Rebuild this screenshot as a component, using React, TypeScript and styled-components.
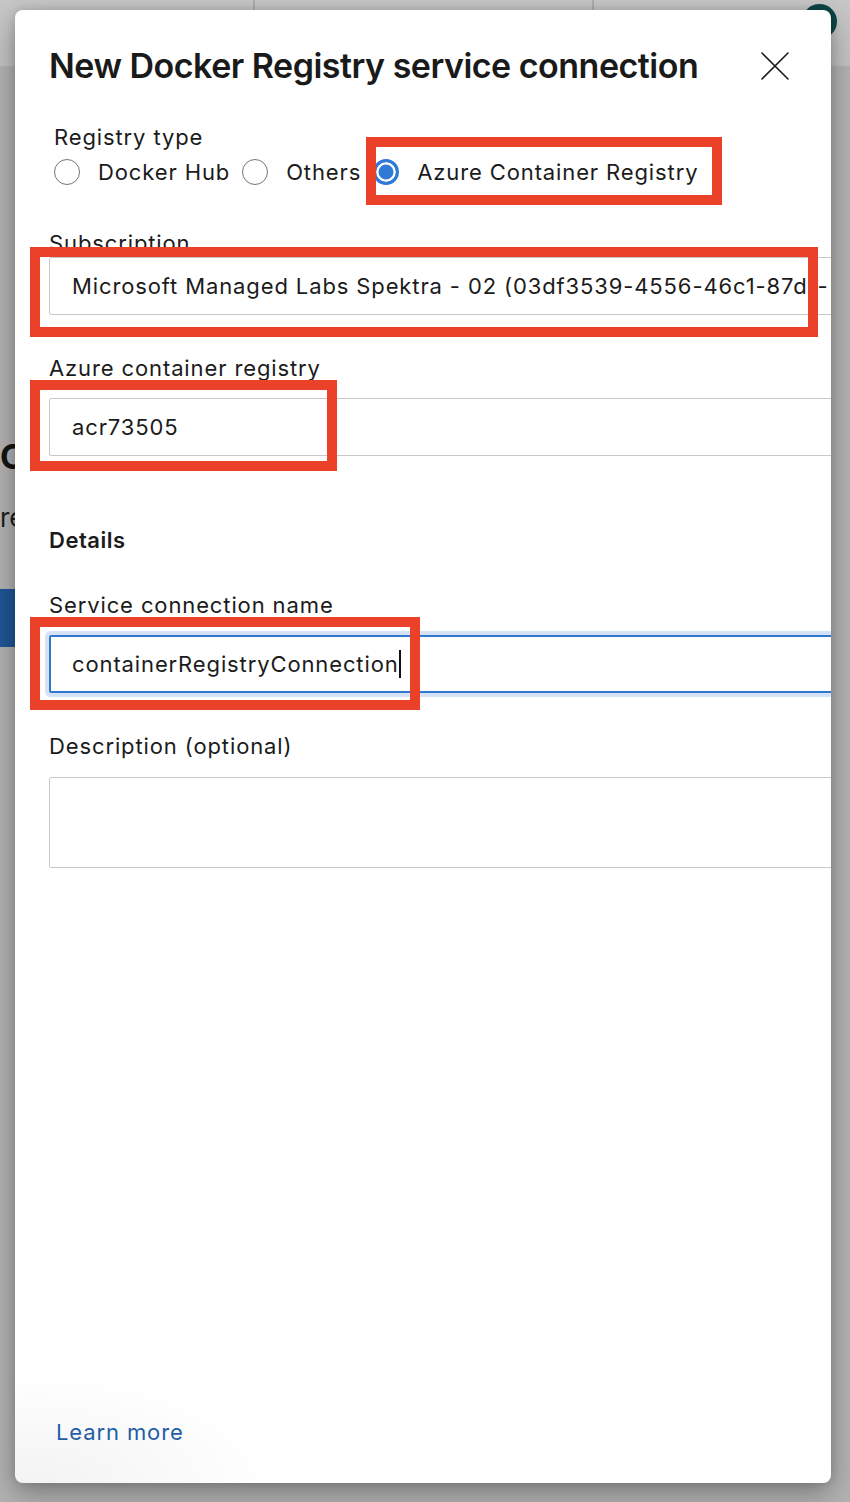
import React from "react";
import styled, { createGlobalStyle } from "styled-components";

const GlobalStyle = createGlobalStyle`
  html, body { margin: 0; padding: 0; }
  body {
    width: 850px;
    height: 1502px;
    overflow: hidden;
    background: #b2b2b2;
    font-family: Inter, "Liberation Sans", sans-serif;
  }
  * { box-sizing: border-box; }
`;

const FONT = `Inter, "Liberation Sans", sans-serif`;
const BODY_SPACING = "0.88px";

const Page = styled.div`
  position: relative;
  width: 850px;
  height: 1502px;
  overflow: hidden;
  background: #b2b2b2;
  font-family: ${FONT};
`;

/* ---------- page behind the dialog ---------- */
const BackHeader = styled.header`
  display: flex;
  height: 66px;
  background: linear-gradient(#c7c7c7, #c1c1c1);
`;

const HeaderCell = styled.div<{ $w: number }>`
  flex: none;
  width: ${(p) => p.$w}px;
  border-right: 2px solid #adadad;
`;

const HeaderEnd = styled.div`
  flex: 1;
  display: flex;
  justify-content: flex-end;
  align-items: flex-start;
  padding: 4px 13px 0 0;
`;

const Avatar = styled.div`
  width: 35px;
  height: 35px;
  border-radius: 50%;
  background: #0e4646;
`;

const BackBody = styled.main`
  display: flex;
  flex-direction: column;
  align-items: flex-start;
  padding-top: 371px;
`;

const BackHeading = styled.h2`
  margin: 0;
  font-size: 34px;
  line-height: 40px;
  font-weight: 700;
  color: #141414;
  white-space: nowrap;
`;

const BackText = styled.p`
  margin: 25px 0 0;
  font-size: 26px;
  line-height: 32px;
  color: #1c1c1c;
  white-space: nowrap;
`;

const BackButton = styled.div`
  margin-top: 55px;
  width: 220px;
  height: 58px;
  background: #1f5596;
`;

/* ---------- dialog ---------- */
const Dialog = styled.section`
  position: absolute;
  left: 15px;
  top: 10px;
  width: 816px;
  height: 1473px;
  display: flex;
  flex-direction: column;
  padding: 36px 0 37px 34px;
  overflow: hidden;
  border-radius: 8px;
  background: radial-gradient(ellipse 240px 110px at 20px 1473px, #f3f3f3 0, #ffffff 100%);
  box-shadow: 0 10px 28px rgba(0, 0, 0, 0.32), 0 0 10px rgba(0, 0, 0, 0.12);
  color: #1b1b1b;
`;

const TitleRow = styled.div`
  display: flex;
  align-items: center;
  justify-content: space-between;
  padding-right: 42px;
`;

const Title = styled.h1`
  margin: 0;
  font-size: 34px;
  line-height: 40px;
  font-weight: 600;
  letter-spacing: -0.5px;
  color: #1a1a1a;
  white-space: nowrap;
`;

const CloseButton = styled.button`
  display: flex;
  padding: 0;
  border: none;
  background: none;
  width: 28px;
  height: 28px;
`;

const Group = styled.div<{ $top: number; $indent?: number }>`
  display: flex;
  flex-direction: column;
  margin-top: ${(p) => p.$top}px;
  padding-left: ${(p) => p.$indent ?? 0}px;
`;

const Label = styled.label<{ $gap?: number }>`
  display: block;
  font-size: 22px;
  line-height: 28px;
  letter-spacing: ${BODY_SPACING};
  margin-bottom: ${(p) => p.$gap ?? 16}px;
  color: #1b1b1b;
  white-space: nowrap;
`;

const SectionTitle = styled.h3`
  margin: 0;
  font-size: 22px;
  line-height: 28px;
  font-weight: 600;
  letter-spacing: 0.5px;
  color: #1b1b1b;
`;

const RadioRow = styled.div`
  display: flex;
  align-items: center;
  height: 28px;
`;

const RadioOption = styled.div`
  display: flex;
  align-items: center;
  gap: 18px;
  margin-right: 12px;
  font-size: 22px;
  letter-spacing: ${BODY_SPACING};
  white-space: nowrap;
`;

const RadioCircle = styled.span<{ $checked?: boolean }>`
  flex: none;
  width: 26px;
  height: 26px;
  border-radius: 50%;
  border: ${(p) => (p.$checked ? "3px solid #2f7ad6" : "1.5px solid #747474")};
  background: ${(p) => (p.$checked ? "#2f7ad6" : "#ffffff")};
  box-shadow: ${(p) => (p.$checked ? "inset 0 0 0 2.5px #ffffff" : "none")};
`;

const Input = styled.div<{ $focused?: boolean }>`
  display: flex;
  align-items: center;
  width: 820px;
  height: 58px;
  padding-left: ${(p) => (p.$focused ? 21 : 22)}px;
  border: ${(p) => (p.$focused ? "2px solid #2f78d2" : "1.5px solid #c8c8c8")};
  border-radius: 2px;
  box-shadow: ${(p) => (p.$focused ? "0 0 0 4px #d5e3f4" : "none")};
  font-size: 22px;
  letter-spacing: ${BODY_SPACING};
  color: #1b1b1b;
  white-space: nowrap;
  overflow: hidden;
`;

const Caret = styled.span`
  display: inline-block;
  width: 2px;
  height: 28px;
  background: #111;
`;

const TextArea = styled.div`
  width: 820px;
  height: 91px;
  border: 1.5px solid #c8c8c8;
  border-radius: 2px;
`;

const Footer = styled.div`
  margin-top: auto;
  padding-left: 7px;
`;

const LearnMore = styled.a`
  font-size: 22px;
  line-height: 28px;
  letter-spacing: ${BODY_SPACING};
  color: #1f5ea6;
  text-decoration: none;
`;

/* ---------- annotation overlays ---------- */
const Highlight = styled.div<{ $x: number; $y: number; $w: number; $h: number }>`
  position: absolute;
  left: ${(p) => p.$x}px;
  top: ${(p) => p.$y}px;
  width: ${(p) => p.$w}px;
  height: ${(p) => p.$h}px;
  border: 10px solid #eb4128;
  pointer-events: none;
`;

const CloseIcon = () => (
  <svg width="28" height="28" viewBox="0 0 28 28" fill="none">
    <path d="M1 1 L27 27 M27 1 L1 27" stroke="#1b1b1b" strokeWidth="1.6" strokeLinecap="round" />
  </svg>
);

export default function App() {
  return (
    <Page>
      <GlobalStyle />
      <BackHeader>
        <HeaderCell $w={255} />
        <HeaderCell $w={339} />
        <HeaderEnd>
          <Avatar />
        </HeaderEnd>
      </BackHeader>
      <BackBody>
        <BackHeading>Create your first service connection</BackHeading>
        <BackText>resources outside of your project</BackText>
        <BackButton />
      </BackBody>

      <Dialog>
        <TitleRow>
          <Title>New Docker Registry service connection</Title>
          <CloseButton aria-label="Close">
            <CloseIcon />
          </CloseButton>
        </TitleRow>

        <Group $top={37} $indent={5}>
          <Label $gap={7}>Registry type</Label>
          <RadioRow>
            <RadioOption>
              <RadioCircle />
              Docker Hub
            </RadioOption>
            <RadioOption>
              <RadioCircle />
              Others
            </RadioOption>
            <RadioOption>
              <RadioCircle $checked />
              Azure Container Registry
            </RadioOption>
          </RadioRow>
        </Group>

        <Group $top={43}>
          <Label $gap={0}>Subscription</Label>
          <Input>Microsoft Managed Labs Spektra - 02 (03df3539-4556-46c1-87d1-</Input>
        </Group>

        <Group $top={39}>
          <Label>Azure container registry</Label>
          <Input>acr73505</Input>
        </Group>

        <Group $top={70}>
          <SectionTitle>Details</SectionTitle>
        </Group>

        <Group $top={37}>
          <Label>Service connection name</Label>
          <Input $focused>
            containerRegistryConnection
            <Caret />
          </Input>
        </Group>

        <Group $top={39}>
          <Label $gap={17}>Description (optional)</Label>
          <TextArea />
        </Group>

        <Footer>
          <LearnMore href="#">Learn more</LearnMore>
        </Footer>
      </Dialog>

      <Highlight $x={366} $y={137} $w={356} $h={68} />
      <Highlight $x={30} $y={247} $w={788} $h={90} />
      <Highlight $x={30} $y={380} $w={307} $h={91} />
      <Highlight $x={30} $y={617} $w={390} $h={93} />
    </Page>
  );
}
